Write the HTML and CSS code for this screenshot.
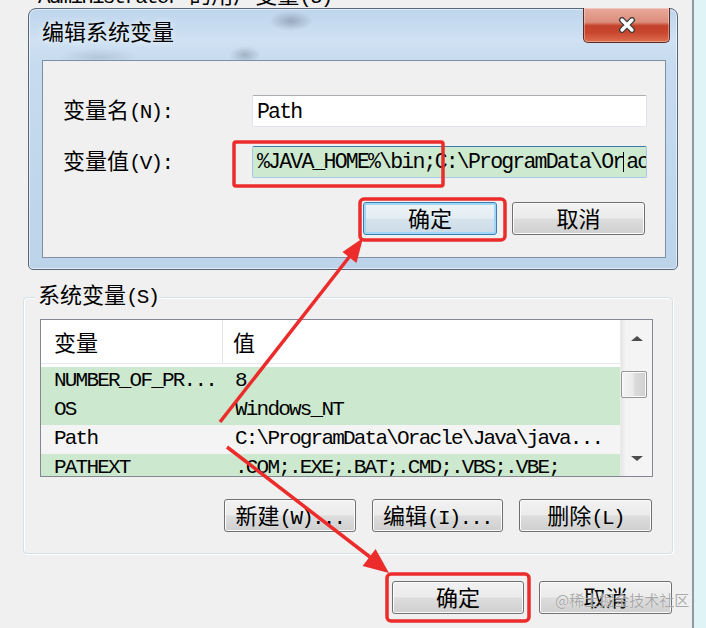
FILE: index.html
```html
<!DOCTYPE html>
<html>
<head>
	<meta charset="utf-8">
	<title>编辑系统变量</title>
	<link rel="stylesheet" href="styles.css">
</head>

<body>
	<div class="screen">
		<div class="win">
			<div class="parent-cap"><span class="cap-text">Administrator <span class="zh">的用户变量</span>(U)</span></div>

			<div class="dlg">
				<div class="dlg-bar">
					<div class="dlg-title">编辑系统变量</div>
					<div class="dlg-close">
						<svg width="20" height="16" viewBox="0 0 20 16">
							<path d="M5 3 L15 13 M15 3 L5 13" stroke="#3b3b3b" stroke-width="6" stroke-linecap="round"/>
							<path d="M5 3 L15 13 M15 3 L5 13" stroke="#fff" stroke-width="3.4" stroke-linecap="round"/>
						</svg>
					</div>
				</div>

				<div class="dlg-body">
					<div class="field">
						<label class="lbl"><span class="zh">变量名</span>(N):</label>
						<div class="tb">Path</div>
					</div>
					<div class="field field-2">
						<label class="lbl"><span class="zh">变量值</span>(V):</label>
						<div class="tb tb-focus">%JAVA_HOME%\bin;C:\ProgramData\Or<span class="caret"></span>acle\Java\javapath;</div>
					</div>
					<div class="btn-row dlg-btns">
						<button class="btn btn-default w134">确定</button>
						<button class="btn w133">取消</button>
					</div>
				</div>
			</div>

			<div class="group">
				<div class="group-title"><span class="zh">系统变量</span>(S)</div>

				<div class="lv">
					<div class="lv-main">
						<div class="lv-head">
							<div class="col1 zh">变量</div>
							<div class="col2 zh">值</div>
						</div>
						<div class="lv-rows">
							<div class="lv-row">
								<div class="col1">NUMBER_OF_PR...</div>
								<div class="col2">8</div>
							</div>
							<div class="lv-row">
								<div class="col1">OS</div>
								<div class="col2">Windows_NT</div>
							</div>
							<div class="lv-row selected">
								<div class="col1">Path</div>
								<div class="col2">C:\ProgramData\Oracle\Java\java...</div>
							</div>
							<div class="lv-row">
								<div class="col1">PATHEXT</div>
								<div class="col2">.COM;.EXE;.BAT;.CMD;.VBS;.VBE;</div>
							</div>
						</div>
					</div>
					<div class="sb">
						<div class="sb-btn"><span class="arrow-up"></span></div>
						<div class="sb-thumb"></div>
						<div class="sb-track"></div>
						<div class="sb-btn"><span class="arrow-down"></span></div>
					</div>
				</div>

				<div class="btn-row group-btns">
					<button class="btn w132"><span class="zh">新建</span>(W)...</button>
					<button class="btn w131"><span class="zh">编辑</span>(I)...</button>
					<button class="btn w133"><span class="zh">删除</span>(L)</button>
				</div>
			</div>

			<div class="btn-row bottom-btns">
				<button class="btn w132">确定</button>
				<button class="btn w133">取消</button>
			</div>
		</div>
		<div class="desk"></div>
	</div>

	<!-- red marks drawn over the screenshot -->
	<svg class="marks" width="706" height="628" viewBox="0 0 706 628">
		<g fill="none" stroke="#ec2b2b" stroke-width="3.5">
			<rect x="234" y="142" width="209" height="44" rx="2"/>
			<rect x="360" y="199" width="145" height="41" rx="4"/>
			<rect x="387" y="574" width="142" height="47" rx="4"/>
			<path d="M220 422 L350 256"/>
			<path d="M227 447 L370 557"/>
		</g>
		<g fill="#ec2b2b">
			<polygon points="363,238 356.5,263 342.5,252"/>
			<polygon points="389,573 362.6,566 375.6,549"/>
		</g>
	</svg>

	<div class="watermark">@稀土掘金技术社区</div>
</body>
</html>
```

FILE: styles.css
```css
html {
	box-sizing: border-box;
}
body {
	margin: 0;
	width: 706px;
	height: 628px;
	overflow: hidden;
	background: #f0f0f0;
	font-family: "Liberation Mono", "Noto Sans CJK SC", monospace;
	font-size: 21px;
	letter-spacing: -1.8px;
	color: #000;
}
.zh {
	font-family: "Noto Sans CJK SC", sans-serif;
	font-size: 22px;
	letter-spacing: 0;
}

.screen {
	display: flex;
	height: 628px;
}
.win {
	width: 692px;
	border-right: 2px solid #8f9aa3;
	background: #f0f0f0;
}
.desk {
	flex: 1;
	background: #dff4f7;
}

/* parent window caption, only the bottom shows */
.parent-cap {
	height: 8px;
	overflow: hidden;
	padding-left: 38px;
	line-height: 22px;
	white-space: nowrap;
}
.cap-text {
	display: block;
	height: 22px;
	margin-top: -18px;
}

/* edit dialog */
.dlg {
	margin-left: 28px;
	width: 650px;
	height: 262px;
	box-sizing: border-box;
	border: 1px solid #56687b;
	border-radius: 8px 8px 5px 5px;
	padding: 0 11px 11px 13px;
	display: flex;
	flex-direction: column;
	background:
		radial-gradient(ellipse 22px 10px at 262px 12px, rgba(70,80,100,.35), transparent),
		radial-gradient(ellipse 16px 9px at 216px 46px, rgba(70,80,100,.3), transparent),
		radial-gradient(ellipse 40px 9px at 70px 48px, rgba(90,100,120,.18), transparent),
		linear-gradient(180deg, #bed5ed 0%, #cfe1f3 12%, #c6dbef 22%, #bcd3ea 100%);
	box-shadow: inset 0 0 0 1px rgba(255,255,255,.55);
}
.dlg-bar {
	height: 51px;
	display: flex;
	justify-content: space-between;
	align-items: flex-start;
}
.dlg-title {
	margin-top: 8px;
	font-family: "Noto Sans CJK SC", sans-serif;
	font-size: 22px;
	letter-spacing: 0;
	line-height: 26px;
	text-shadow: 0 0 6px rgba(255,255,255,.9);
}
.dlg-close {
	width: 87px;
	height: 35px;
	margin-right: -4px;
	margin-top: -1px;
	box-sizing: border-box;
	border: 1px solid #5b2a22;
	border-top: none;
	border-radius: 0 0 5px 5px;
	background: linear-gradient(180deg, #e9aa9c 0%, #dc8c7a 42%, #c4412b 52%, #c8462e 72%, #de6d4f 100%);
	box-shadow: inset 0 0 0 1px rgba(255,255,255,.35);
	display: flex;
	align-items: center;
	justify-content: center;
}
.dlg-body {
	flex: 1;
	box-sizing: border-box;
	border: 1px solid #7d8fa3;
	background: #f0f0f0;
	padding: 34px 18px 0 20px;
}

.field {
	display: flex;
	align-items: center;
	height: 32px;
}
.field-2 {
	margin-top: 19px;
}
.lbl {
	width: 189px;
	height: 32px;
	line-height: 27px;
	white-space: nowrap;
}
.tb {
	width: 395px;
	height: 32px;
	box-sizing: border-box;
	border: 1px solid #e2e3ea;
	border-top-color: #abadb3;
	border-radius: 2px;
	background: #fff;
	padding: 2px 0 0 4px;
	font-size: 21.5px;
	line-height: 28px;
	white-space: nowrap;
	overflow: hidden;
}
.tb-focus {
	background: #cde9d0;
	border-color: #a4c9e3;
	border-top-color: #3d7bad;
	padding-top: 1px;
}
.caret {
	display: inline-block;
	width: 1px;
	height: 20px;
	margin-right: 1.8px;
	background: #000;
	vertical-align: -4px;
}

/* buttons */
.btn-row {
	display: flex;
	justify-content: flex-end;
	gap: 15px;
}
.btn {
	height: 33px;
	padding: 0 0 3px;
	box-sizing: border-box;
	border: 1px solid #707070;
	border-radius: 3px;
	background: linear-gradient(180deg, #f2f2f2 0%, #ebebeb 48%, #dddddd 52%, #cfcfcf 100%);
	box-shadow: inset 0 0 0 1px #fbfbfb;
	font-family: "Noto Sans CJK SC", sans-serif;
	font-size: 22px;
	letter-spacing: 0;
	line-height: 28px;
	color: #000;
	white-space: nowrap;
}
.btn .zh {
	font-size: 22px;
}
.group-btns .btn {
	font-family: "Liberation Mono", "Noto Sans CJK SC", monospace;
	font-size: 21px;
	letter-spacing: -1.8px;
}
.group-btns .btn .zh {
	letter-spacing: 0;
}
.btn-default {
	border-color: #3c7fb1;
	background: linear-gradient(180deg, #eef4f8 0%, #e4edf3 48%, #d6e3ec 52%, #cbdbe6 100%);
	box-shadow: inset 0 0 0 2px #9fd8f6;
}
.w131 { width: 131px; }
.w132 { width: 132px; }
.w133 { width: 133px; }
.w134 { width: 134px; }

.dlg-btns {
	margin-top: 24px;
	margin-right: 2px;
}

/* system variables group */
.group {
	margin: 27px 0 0 23px;
	width: 650px;
	height: 257px;
	box-sizing: border-box;
	border: 1px solid #d5dfe5;
	border-radius: 4px;
	padding: 0 19px 0 16px;
	box-shadow: inset 1px 1px 0 #fff, 1px 1px 0 #fff;
}
.group-title {
	width: fit-content;
	height: 30px;
	margin: -18px 0 0 -5px;
	padding: 0 3px;
	background: #f0f0f0;
	line-height: 27px;
	white-space: nowrap;
}

.lv {
	margin-top: 9px;
	height: 158px;
	box-sizing: border-box;
	border: 1px solid #828790;
	display: flex;
	background: #fff;
}
.lv-main {
	flex: 1;
	overflow: hidden;
}
.lv-head {
	height: 44px;
	box-sizing: border-box;
	border-bottom: 1px solid #e8e8e8;
	display: flex;
	background: #fff;
	line-height: 42px;
}
.lv-head .col1 {
	border-right: 1px solid #e5e5e5;
}
.col1 {
	width: 182px;
	box-sizing: border-box;
	padding-left: 13px;
	white-space: nowrap;
}
.col2 {
	padding-left: 12px;
	white-space: nowrap;
}
.lv-head .col2 {
	padding-left: 10px;
}
.lv-rows {
	padding-top: 3px;
}
.lv-row {
	display: flex;
	height: 29px;
	line-height: 28px;
	background: #cce8cf;
}
.lv-row.selected {
	background: #f4f4f4;
}

.sb {
	width: 31px;
	display: flex;
	flex-direction: column;
	background: linear-gradient(90deg, #e6e6e6 0%, #f3f3f3 15%, #f5f5f5 100%);
	border-left: 1px solid #ececec;
}
.sb-btn {
	height: 36px;
	display: flex;
	align-items: center;
	justify-content: center;
}
.arrow-up {
	border-left: 6px solid transparent;
	border-right: 6px solid transparent;
	border-bottom: 5px solid #4d4d4d;
}
.arrow-down {
	border-left: 6px solid transparent;
	border-right: 6px solid transparent;
	border-top: 5px solid #4d4d4d;
}
.sb-thumb {
	margin: 15px 0 0 0;
	width: 26px;
	height: 27px;
	box-sizing: border-box;
	border: 1px solid #969696;
	border-radius: 2px;
	background: linear-gradient(90deg, #f4f4f4 0%, #eaeaea 45%, #dadada 55%, #d0d0d0 100%);
	box-shadow: inset 0 0 0 1px #fafafa;
}
.sb-track {
	flex: 1;
}

.group-btns {
	margin-top: 22px;
	margin-right: 1px;
	gap: 16px;
}

.bottom-btns {
	margin-top: 27px;
	margin-right: 20px;
}

/* overlays */
.marks {
	position: absolute;
	left: 0;
	top: 0;
	pointer-events: none;
}
.watermark {
	position: absolute;
	left: 555px;
	top: 589px;
	font-family: "Noto Sans CJK SC", sans-serif;
	font-size: 15px;
	letter-spacing: 0;
	line-height: 22px;
	color: rgba(140,140,140,.75);
	text-shadow: 0 0 1px #fff;
	white-space: nowrap;
}
```
